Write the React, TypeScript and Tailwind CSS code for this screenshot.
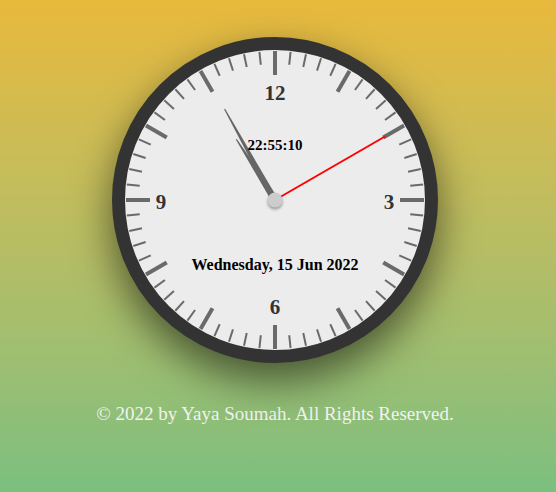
import React from 'react';

const R = 150;
const C = 150;

const polar = (deg: number, r: number) => {
  const a = ((deg - 90) * Math.PI) / 180;
  return { x: C + r * Math.cos(a), y: C + r * Math.sin(a) };
};

const Ticks: React.FC = () => (
  <>
    {Array.from({ length: 60 }).map((_, i) => {
      const major = i % 5 === 0;
      const a = polar(i * 6, R - 1);
      const b = polar(i * 6, major ? R - 25 : R - 14);
      return (
        <line
          key={i}
          x1={a.x}
          y1={a.y}
          x2={b.x}
          y2={b.y}
          stroke="#6a6a6a"
          strokeWidth={major ? 4 : 2}
        />
      );
    })}
  </>
);

const Hand: React.FC<{ deg: number; len: number; base: number }> = ({ deg, len, base }) => (
  <polygon
    points={`${C - base / 2},${C} ${C + base / 2},${C} ${C + 0.6},${C - len} ${C - 0.6},${C - len}`}
    fill="#666"
    transform={`rotate(${deg} ${C} ${C})`}
  />
);

const App: React.FC = () => {
  const h = 22, m = 55, s = 10;
  const hourDeg = ((h % 12) + m / 60) * 30;
  const minDeg = (m + s / 60) * 6;
  const secDeg = s * 6;

  return (
    <div className="min-h-[492px] w-full bg-linear-to-b from-[#e8b93b] to-[#7bbf7f] flex flex-col items-center pt-[37px] pr-[6px] font-['Liberation_Serif',serif]">
      <div className="relative w-[326px] h-[326px] rounded-full border-[13px] border-[#333] bg-[#ececec] shadow-[0_18px_40px_rgba(0,0,0,0.55)]">
        <svg className="absolute inset-0" width="300" height="300" viewBox="0 0 300 300">
          <Ticks />
          <Hand deg={hourDeg} len={72} base={7} />
          <Hand deg={minDeg} len={104} base={6} />
          <line
            x1={C}
            y1={C}
            x2={polar(secDeg, 127).x}
            y2={polar(secDeg, 127).y}
            stroke="#ff0000"
            strokeWidth={2}
          />
        </svg>

        <span className="absolute left-1/2 top-[43px] -translate-x-1/2 -translate-y-1/2 text-[21px] font-bold text-[#333] leading-none">12</span>
        <span className="absolute left-[264px] top-[152px] -translate-x-1/2 -translate-y-1/2 text-[21px] font-bold text-[#333] leading-none">3</span>
        <span className="absolute left-[36px] top-[152px] -translate-x-1/2 -translate-y-1/2 text-[21px] font-bold text-[#333] leading-none">9</span>
        <span className="absolute left-1/2 top-[257px] -translate-x-1/2 -translate-y-1/2 text-[21px] font-bold text-[#333] leading-none">6</span>

        <span className="absolute left-1/2 top-[95px] -translate-x-1/2 -translate-y-1/2 text-[15px] font-bold text-black leading-none whitespace-nowrap">22:55:10</span>
        <span className="absolute left-1/2 top-[215px] -translate-x-1/2 -translate-y-1/2 text-[16px] font-bold text-black leading-none whitespace-nowrap">Wednesday, 15 Jun 2022</span>

        <div className="absolute left-1/2 top-1/2 -translate-x-1/2 -translate-y-1/2 w-[15px] h-[15px] rounded-full bg-[#ccc] shadow-[0_2px_3px_rgba(0,0,0,0.35)]" />
      </div>

      <p className="mt-[40px] text-[19px] leading-[22px] text-[#f2f2f2]">
        © 2022 by Yaya Soumah. All Rights Reserved.
      </p>
    </div>
  );
};

export default App;
